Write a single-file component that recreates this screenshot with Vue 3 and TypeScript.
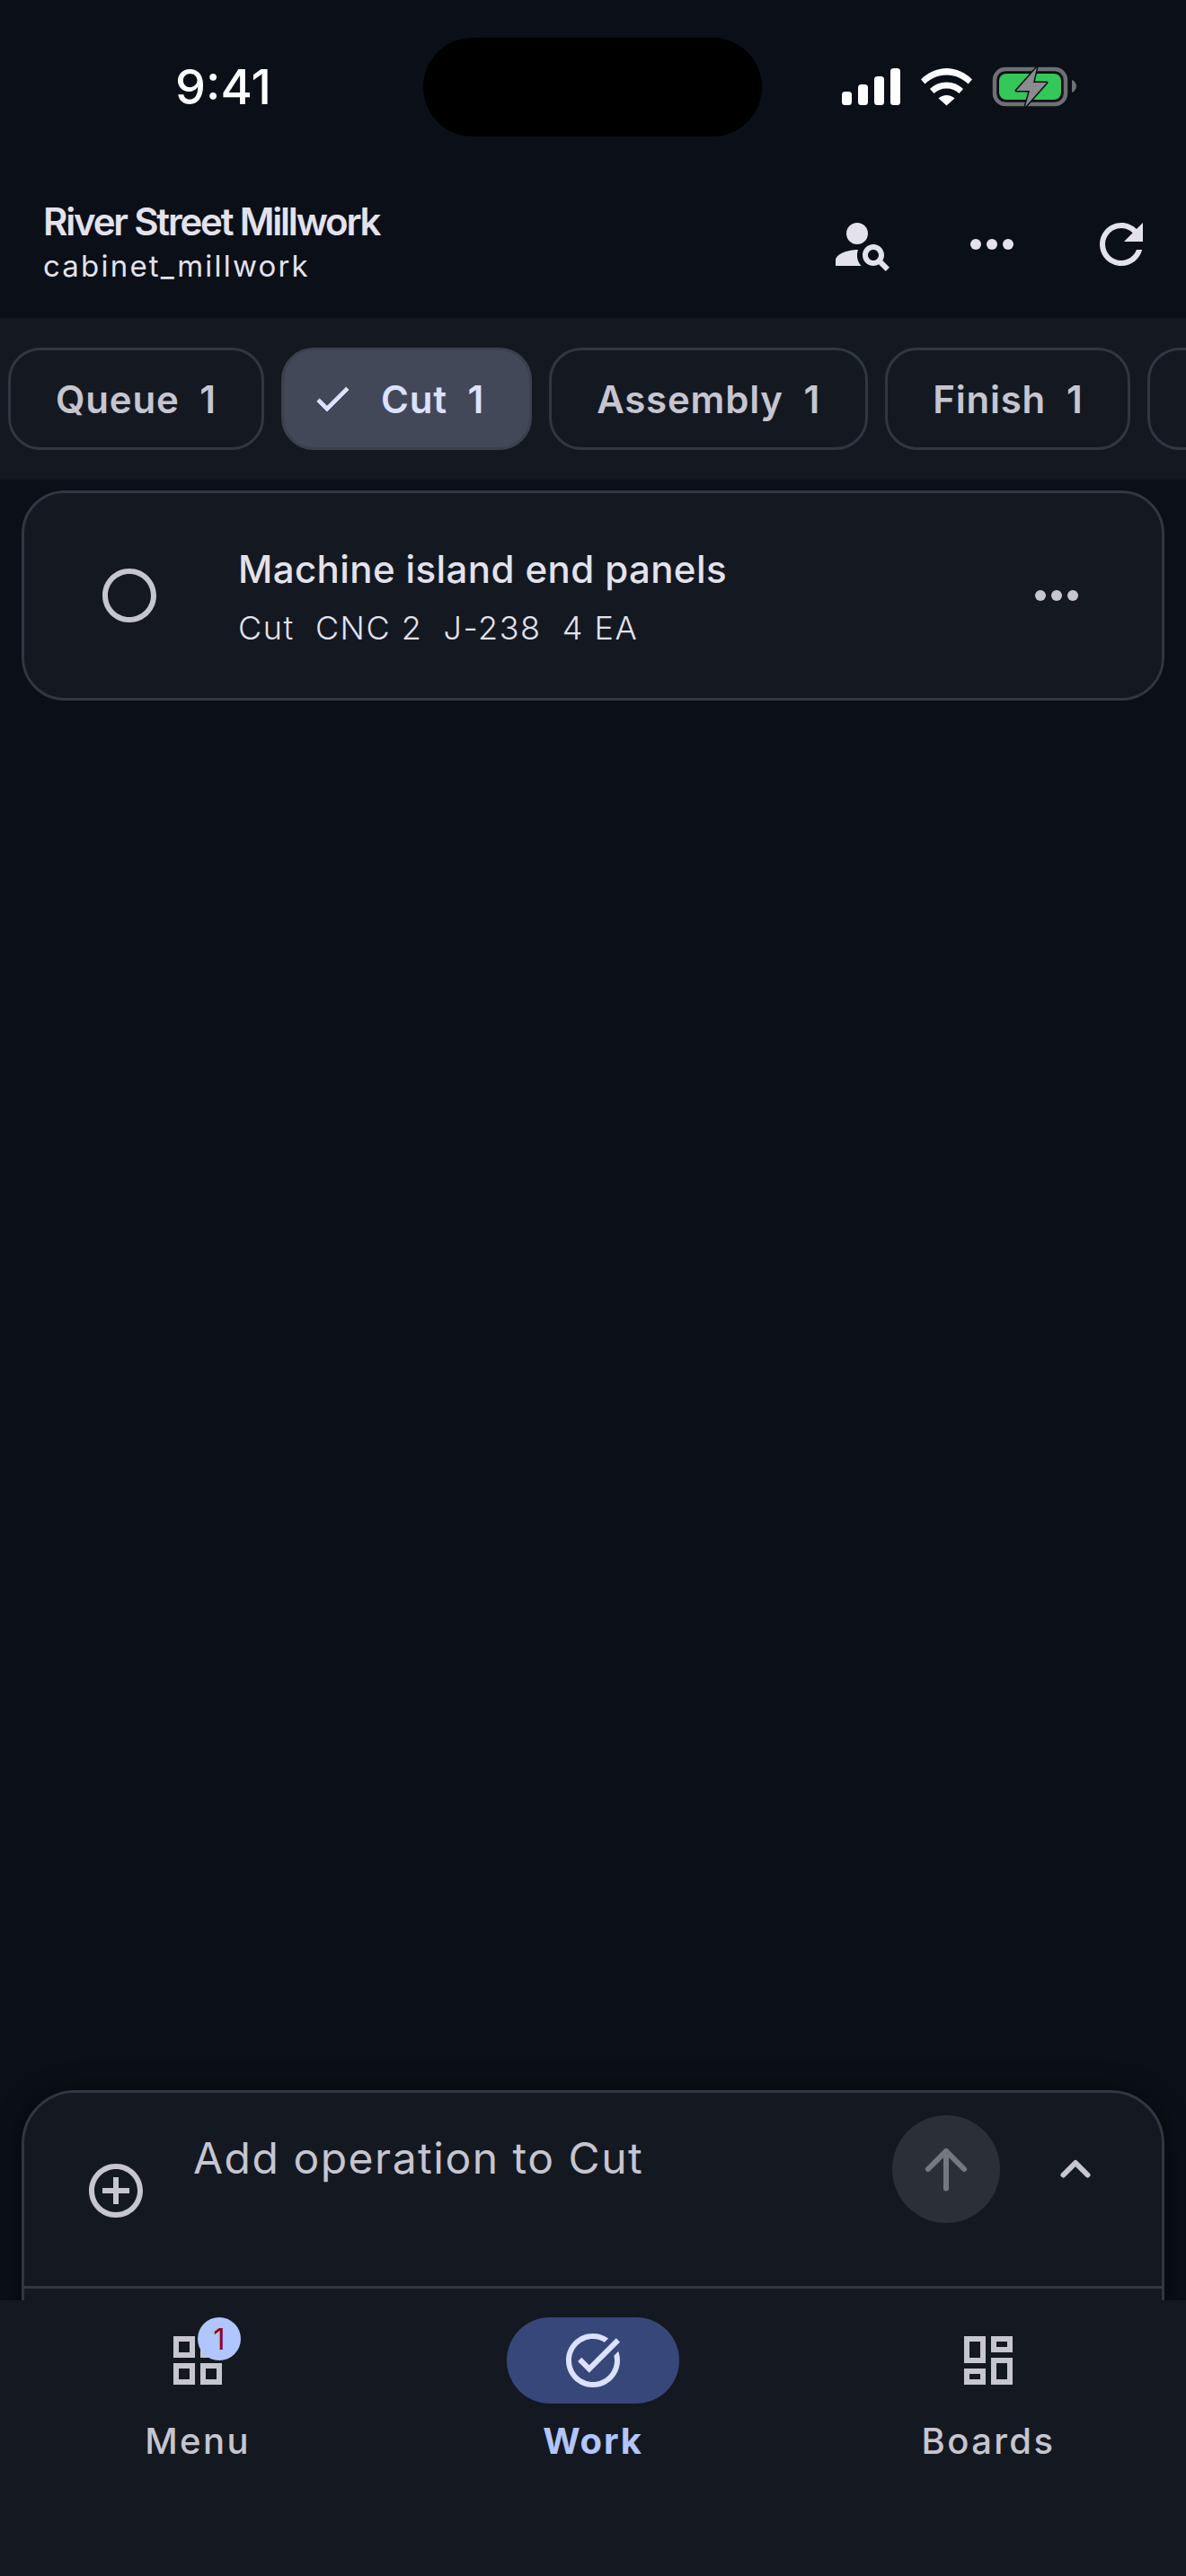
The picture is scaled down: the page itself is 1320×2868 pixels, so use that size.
<template>
  <div class="screen">
    <div class="status-bar">
      <span class="clock">9:41</span>
      <div class="island" />
      <svg class="status-icons" width="264" height="46" viewBox="937 74 264 46">
        <rect x="937" y="102" width="11" height="15" rx="3.5" fill="#fff" />
        <rect x="955" y="94" width="11" height="23" rx="3.5" fill="#fff" />
        <rect x="973" y="85" width="11" height="32" rx="3.5" fill="#fff" />
        <rect x="991" y="76" width="11" height="41" rx="3.5" fill="#fff" />
        <path d="M1025 88.5C1032 81 1043 76 1053.500 76S1075 81 1082 88.500L1077.500 93.500C1071.500 87.500 1063 83.500 1053.500 83.500S1035.500 87.500 1029.500 93.500Z" fill="#fff" />
        <path d="M1035 99C1039.500 94.500 1046 91.500 1053.500 91.500S1067.500 94.500 1072 99L1067.500 104C1064 100.500 1059 98.500 1053.500 98.500S1043 100.500 1039.500 104Z" fill="#fff" />
        <path d="M1044.500 109.500C1047 107.500 1050 106 1053.500 106S1060 107.500 1062.500 109.500L1053.500 117.500Z" fill="#fff" />
        <rect x="1107" y="77" width="79" height="39" rx="12" fill="none" stroke="#6e7073" stroke-width="4.500" />
        <rect x="1112" y="82" width="69" height="29" rx="8" fill="#34c759" />
        <path d="M1193 89C1196 90 1198 93 1198 96S1196 102 1193 103Z" fill="#6e7073" />
        <path d="M1154 75L1131 101H1146L1141 119L1165 92H1150Z" fill="#8a8c90" stroke="#0b0f17" stroke-width="3" stroke-linejoin="round" paint-order="stroke" />
      </svg>
    </div>

    <header class="app-header">
      <div class="brand">
        <p class="brand-name">River Street Millwork</p>
        <p class="brand-slug">cabinet_millwork</p>
      </div>
      <div class="actions">
        <svg class="icon" viewBox="0 0 24 24">
          <circle cx="10" cy="8" r="4" />
          <path d="M10.350 14.010C7.620 13.910 2 15.270 2 18v2h9.540c-2.470-2.760-1.230-5.890-1.190-5.990z" />
          <path d="M19.430 18.020c.36-.59.57-1.280.57-2.020 0-2.210-1.790-4-4-4s-4 1.790-4 4 1.790 4 4 4c.74 0 1.430-.22 2.020-.57L20.590 22 22 20.590l-2.570-2.570zM16 18c-1.100 0-2-.9-2-2s.9-2 2-2 2 .9 2 2-.9 2-2 2z" />
        </svg>
        <svg class="icon" viewBox="0 0 24 24">
          <circle cx="6" cy="12" r="2" />
          <circle cx="12" cy="12" r="2" />
          <circle cx="18" cy="12" r="2" />
        </svg>
        <svg class="icon" viewBox="0 0 24 24">
          <path d="M17.650 6.350C16.200 4.900 14.210 4 12 4c-4.420 0-7.990 3.580-7.990 8s3.570 8 7.990 8c3.730 0 6.840-2.550 7.730-6h-2.080c-.82 2.330-3.040 4-5.650 4-3.310 0-6-2.690-6-6s2.690-6 6-6c1.660 0 3.140.69 4.220 1.780L13 11h7V4l-2.350 2.350z" />
        </svg>
      </div>
    </header>

    <div class="stages">
      <div
        v-for="stage in stages"
        :key="stage.name"
        class="chip"
        :class="{ active: stage.active }"
      >
        <svg v-if="stage.active" class="chip-check" viewBox="0 0 24 24">
          <path d="M9 16.170L4.830 12l-1.410 1.410L9 19 21 7l-1.410-1.410z" />
        </svg>
        <span>{{ stage.name + '  ' + stage.count }}</span>
      </div>
      <div class="chip chip-next" />
    </div>

    <main class="content">
      <div class="list">
        <article class="job">
          <svg class="icon muted" viewBox="0 0 24 24">
            <path d="M12 2C6.480 2 2 6.480 2 12s4.480 10 10 10 10-4.480 10-10S17.520 2 12 2zm0 18c-4.420 0-8-3.580-8-8s3.580-8 8-8 8 3.580 8 8-3.580 8-8 8z" />
          </svg>
          <div class="job-text">
            <p class="job-title">Machine island end panels</p>
            <p class="job-meta">{{ jobMeta }}</p>
          </div>
          <svg class="icon muted" viewBox="0 0 24 24">
            <circle cx="6" cy="12" r="2" />
            <circle cx="12" cy="12" r="2" />
            <circle cx="18" cy="12" r="2" />
          </svg>
        </article>
      </div>

      <section class="composer">
        <div class="composer-row">
          <svg class="icon muted add" viewBox="0 0 24 24">
            <path d="M13 7h-2v4H7v2h4v4h2v-4h4v-2h-4V7zm-1-5C6.480 2 2 6.480 2 12s4.480 10 10 10 10-4.480 10-10S17.520 2 12 2zm0 18c-4.410 0-8-3.590-8-8s3.590-8 8-8 8 3.590 8 8-3.590 8-8 8z" />
          </svg>
          <p class="placeholder">Add operation to Cut</p>
          <div class="send">
            <svg class="stroke" viewBox="0 0 24 24">
              <path d="M12 19.200V5.300M5.300 12L12 5.300 18.700 12" />
            </svg>
          </div>
          <svg class="stroke chevron" viewBox="0 0 24 24">
            <path d="M7.500 14.500L12 10l4.500 4.500" />
          </svg>
        </div>
      </section>
    </main>

    <nav class="tabbar">
      <div v-for="tab in tabs" :key="tab.label" class="tab" :class="{ current: tab.current }">
        <div class="tab-icon">
          <svg class="icon" viewBox="0 0 24 24">
            <path :d="tab.icon" />
          </svg>
          <span v-if="tab.badge" class="badge">{{ tab.badge }}</span>
        </div>
        <span class="tab-label">{{ tab.label }}</span>
      </div>
    </nav>
  </div>
</template>

<script setup lang="ts">
const stages = [
  { name: 'Queue', count: 1, active: false },
  { name: 'Cut', count: 1, active: true },
  { name: 'Assembly', count: 1, active: false },
  { name: 'Finish', count: 1, active: false }
]

const jobMeta = 'Cut  CNC 2  J-238  4 EA'

const tabs = [
  {
    label: 'Menu',
    badge: '1',
    current: false,
    icon: 'M3 3v8h8V3H3zm6 6H5V5h4v4zm-6 4v8h8v-8H3zm6 6H5v-4h4v4zm4-16v8h8V3h-8zm6 6h-4V5h4v4zm-6 4v8h8v-8h-8zm6 6h-4v-4h4v4z'
  },
  {
    label: 'Work',
    badge: '',
    current: true,
    icon: 'M22 5.180L10.590 16.600l-4.240-4.240 1.410-1.410 2.830 2.830 10-10L22 5.180zm-2.210 5.040c.13.57.21 1.170.21 1.780 0 4.420-3.580 8-8 8s-8-3.580-8-8 3.580-8 8-8c1.580 0 3.040.46 4.280 1.250l1.440-1.440C16.100 2.670 14.130 2 12 2 6.480 2 2 6.480 2 12s4.480 10 10 10 10-4.480 10-10c0-1.190-.22-2.330-.6-3.390l-1.610 1.610z'
  },
  {
    label: 'Boards',
    badge: '',
    current: false,
    icon: 'M19 5v2h-4V5h4M9 5v6H5V5h4m10 8v6h-4v-6h4M9 17v2H5v-2h4M21 3h-8v6h8V3zM11 3H3v10h8V3zm10 8h-8v10h8V11zm-10 4H3v6h8v-6z'
  }
]
</script>

<style scoped>
.screen {
  width: 1320px;
  height: 2868px;
  display: flex;
  flex-direction: column;
  overflow: hidden;
  background: #0b0f17;
  color: #e3e2ec;
  font-family: Inter, sans-serif;
}

p {
  margin: 0;
}

.status-bar {
  display: grid;
  grid-template-columns: 471px 377px 1fr;
  height: 190px;
  padding-top: 42px;
  box-sizing: border-box;
}

.clock {
  padding: 23px 0 0 195px;
  font-size: 54px;
  line-height: 64px;
  font-weight: 500;
  color: #fff;
}

.island {
  height: 110px;
  border-radius: 55px;
  background: #000;
}

.status-icons {
  margin: 32px 0 0 89px;
}

.app-header {
  display: flex;
  justify-content: space-between;
  align-items: center;
  height: 164px;
  padding-left: 48px;
}

.brand {
  margin-top: -6px;
}

.brand-name {
  font-size: 42px;
  line-height: 52px;
  font-weight: 600;
  letter-spacing: -2.200px;
}

.brand-slug {
  margin-top: 2px;
  font-size: 33px;
  line-height: 42px;
  font-weight: 400;
  letter-spacing: 2.200px;
}

.actions {
  display: flex;
  gap: 72px;
  padding-right: 36px;
}

.icon {
  display: block;
  width: 72px;
  height: 72px;
  flex: none;
  fill: currentColor;
}

.muted {
  color: #c6c5d0;
}

.stroke {
  display: block;
  width: 72px;
  height: 72px;
  flex: none;
  fill: none;
  stroke: currentColor;
  stroke-width: 2;
  stroke-linecap: round;
  stroke-linejoin: round;
}

.stages {
  display: flex;
  gap: 19px;
  height: 180px;
  padding: 33px 9px;
  box-sizing: border-box;
  overflow: hidden;
  background: #141921;
}

.chip {
  display: flex;
  align-items: center;
  flex: none;
  height: 114px;
  padding: 0 50px;
  box-sizing: border-box;
  border: 3px solid #2f3743;
  border-radius: 36px;
  color: #c6c5d0;
  font-size: 42px;
  font-weight: 600;
  letter-spacing: 0.800px;
  white-space: pre;
}

.chip.active {
  padding-left: 30px;
  gap: 30px;
  background: #434859;
  border-color: #3a404e;
  color: #dce1ff;
}

.chip-next {
  width: 240px;
}

.chip-check {
  width: 48px;
  height: 48px;
  fill: currentColor;
  stroke: currentColor;
  stroke-width: 0.5;
}

.content {
  flex: 1;
  min-height: 0;
  display: flex;
  flex-direction: column;
  padding: 12px 24px 0;
  overflow: hidden;
}

.list {
  flex: 1;
}

.job {
  display: flex;
  align-items: center;
  height: 234px;
  padding: 0 81px;
  box-sizing: border-box;
  border: 3px solid #2f3743;
  border-radius: 48px;
  background: #141921;
}

.job-text {
  flex: 1;
  margin-left: 85px;
  padding-top: 2px;
}

.job-title {
  font-size: 42px;
  line-height: 56px;
  font-weight: 500;
  letter-spacing: 0.400px;
}

.job-meta {
  margin-top: 14px;
  font-size: 36px;
  line-height: 46px;
  font-weight: 300;
  letter-spacing: 1.500px;
  white-space: pre;
}

.composer {
  flex: none;
  height: 300px;
  margin-bottom: -66px;
  box-sizing: border-box;
  border: 3px solid #2f3743;
  border-radius: 60px 60px 0 0;
  background: #141921;
  box-shadow: 0 0 30px rgba(0, 0, 0, 0.45);
}

.composer-row {
  display: flex;
  align-items: flex-start;
  height: 218px;
  padding: 0 60px 0 66px;
  box-sizing: border-box;
  border-bottom: 3px solid #2f3743;
}

.add {
  margin-top: 73px;
}

.placeholder {
  flex: 1;
  margin: 43px 0 0 50px;
  color: #c6c5d0;
  font-size: 48px;
  line-height: 60px;
  font-weight: 400;
  letter-spacing: 1.500px;
}

.send {
  display: flex;
  align-items: center;
  justify-content: center;
  width: 120px;
  height: 120px;
  margin-top: 25px;
  border-radius: 50%;
  background: #2b2f38;
  color: #747881;
}

.chevron {
  margin: 48px 0 0 48px;
  color: #c6c5d0;
}

.tabbar {
  position: relative;
  display: grid;
  grid-template-columns: repeat(3, 1fr);
  height: 307px;
  padding-top: 19px;
  box-sizing: border-box;
  background: #141921;
}

.tab {
  display: flex;
  flex-direction: column;
  align-items: center;
  color: #c6c5d0;
}

.tab-icon {
  position: relative;
  display: flex;
  align-items: center;
  justify-content: center;
  width: 192px;
  height: 96px;
  border-radius: 48px;
}

.tab.current .tab-icon {
  background: #38477a;
  color: #dce1ff;
}

.badge {
  position: absolute;
  top: 0;
  left: 96px;
  width: 48px;
  height: 48px;
  border-radius: 50%;
  background: #b1c5ff;
  color: #8c0a0a;
  font-size: 33px;
  line-height: 48px;
  text-align: center;
}

.tab-label {
  margin-top: 12px;
  font-size: 40px;
  line-height: 60px;
  font-weight: 500;
  letter-spacing: 2.400px;
}

.tab.current .tab-label {
  color: #b1c5ff;
  font-weight: 700;
  letter-spacing: 1.800px;
}
</style>
